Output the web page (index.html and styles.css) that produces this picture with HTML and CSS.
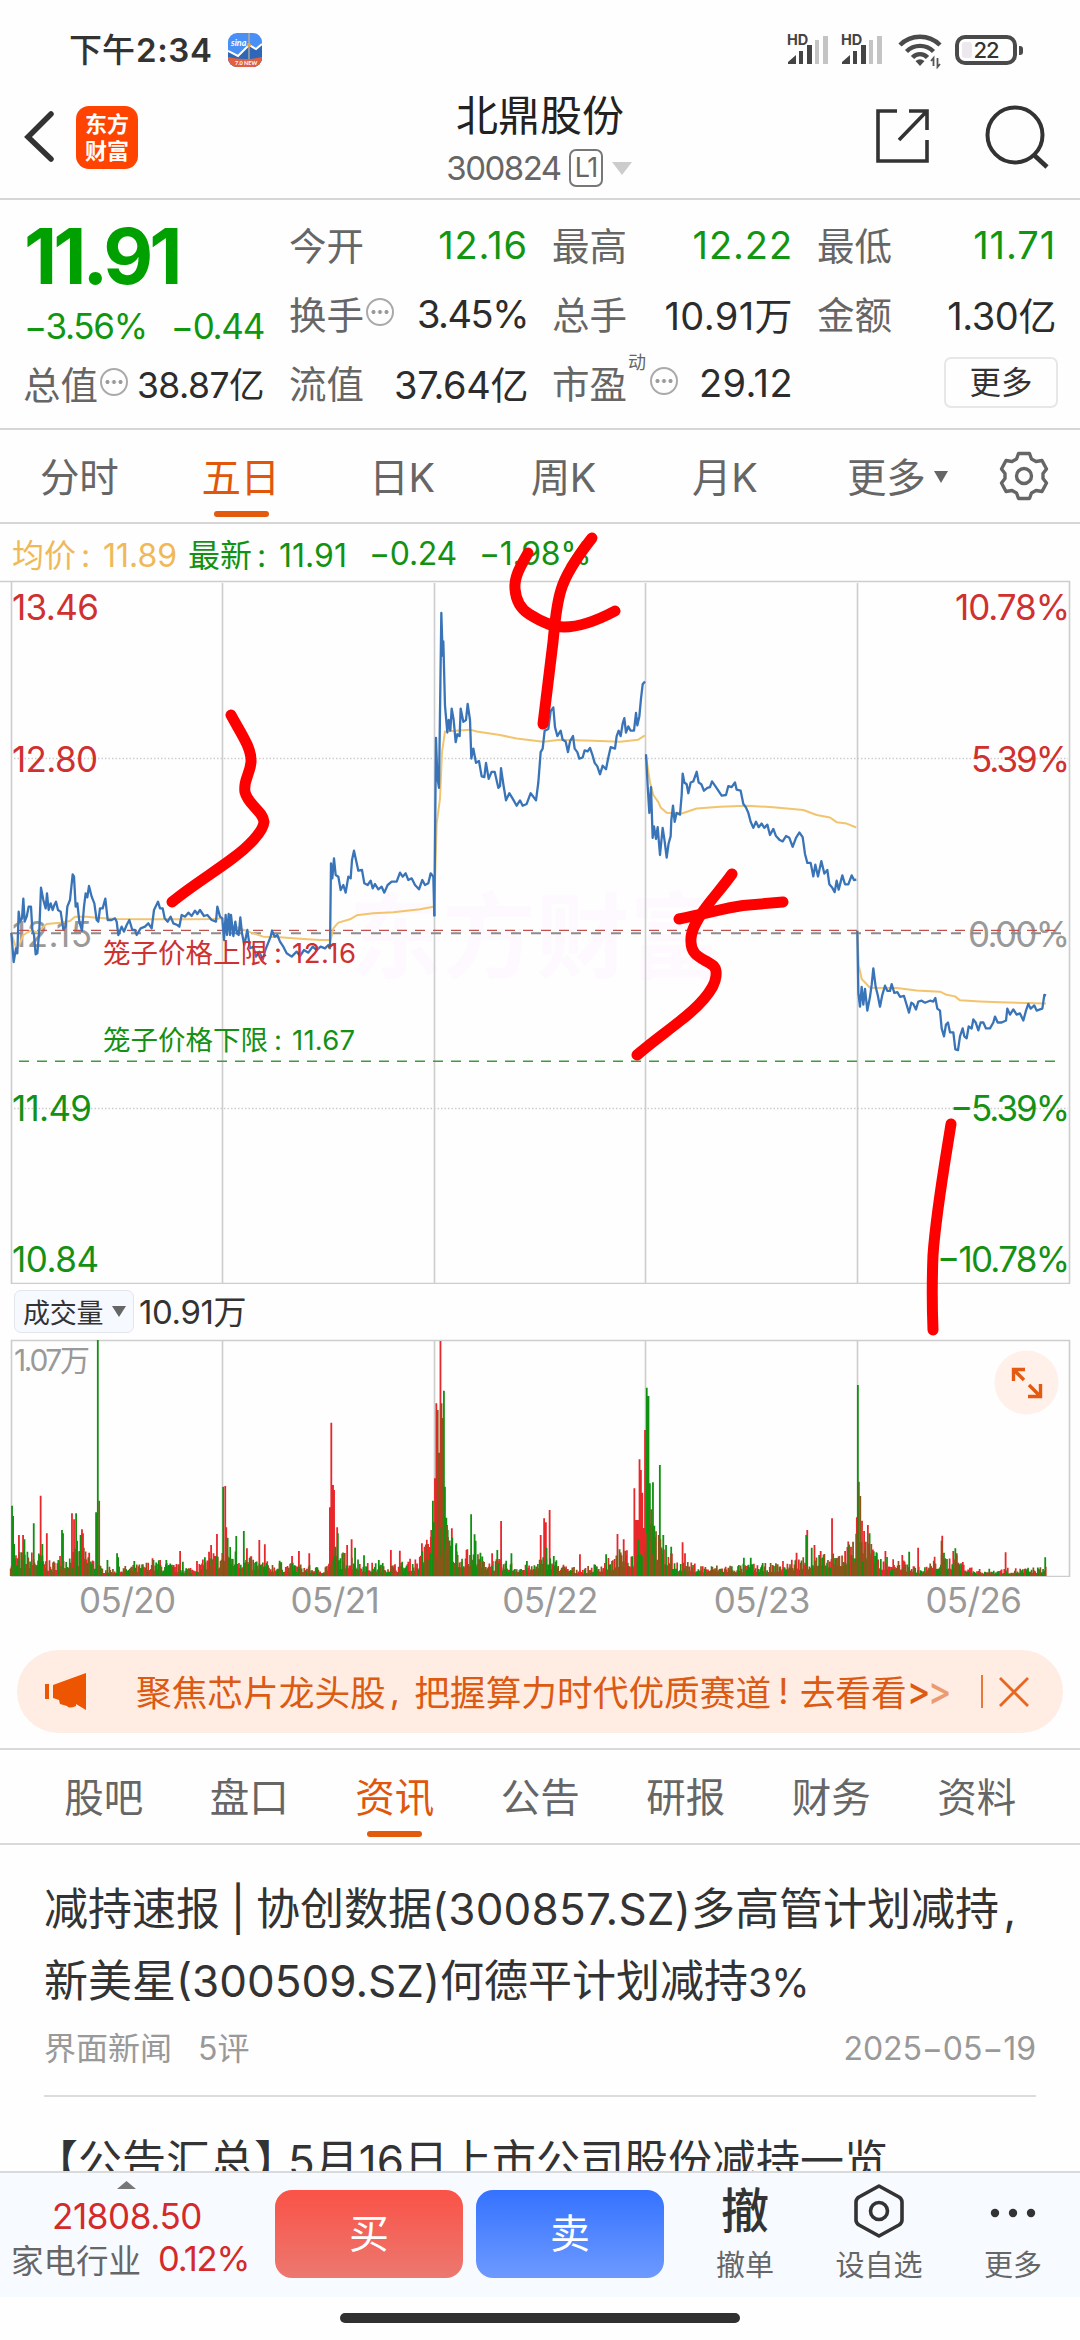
FILE: index.html
```html
<!DOCTYPE html>
<html lang="zh-CN">
<head>
<meta charset="utf-8">
<title>北鼎股份 300824</title>
<link rel="stylesheet" href="styles.css">
</head>
<body>
<div class="screen">
  <div class="status">
    <span class="clock">下午<b>2:34</b></span>
    <svg class="app" width="34" height="34" viewBox="0 0 34 34">
      <defs><clipPath id="r"><rect width="34" height="34" rx="9"/></clipPath></defs>
      <g clip-path="url(#r)"><rect width="34" height="34" fill="#4a90f4"/><path d="M0 18L10 23L21 12L28 16L34 11V34H0Z" fill="#2f66b8"/><path d="M0 18L10 23L21 12L28 16L34 11" fill="none" stroke="#fff" stroke-width="2"/><path d="M21 0V26" stroke="#c9b48e" stroke-width="1.200"/><circle cx="21" cy="12" r="2" fill="#e8a24a"/><path d="M0 24Q17 28 34 24V34H0Z" fill="#e0603f"/></g>
      <text x="3" y="13" class="app-a">sina</text><text x="7" y="32" class="app-b">7.0 NEW</text>
    </svg>
    <span class="grow"></span>
    <svg width="41" height="34" viewBox="0 0 41 34" class="sig"><text x="-1" y="12">HD</text><path d="M0 31V29L8 22V31ZM11 18h4v13h-4ZM19 12h5v19h-5Z" fill="#444"/><path d="M27 7h4v24h-4ZM35 3h5v28h-5Z" fill="#c4c4c4"/></svg>
    <svg width="41" height="34" viewBox="0 0 41 34" class="sig"><text x="-1" y="12">HD</text><path d="M0 31V29L8 22V31ZM11 18h4v13h-4ZM19 12h5v19h-5Z" fill="#444"/><path d="M27 7h4v24h-4ZM35 3h5v28h-5Z" fill="#c4c4c4"/></svg>
    <svg class="wifi" width="44" height="36" viewBox="0 0 44 36"><g fill="none" stroke="#4a4a4a" stroke-width="4.400"><path d="M2 12C13 1 31 1 42 12"/><path d="M8.500 18.500C16 11 28 11 35.500 18.500"/><path d="M14.500 24.500C18.500 20 25.500 20 29.500 24.500"/></g><path d="M17.500 28Q22 24.500 26.500 28L22 33Z" fill="#4a4a4a"/><path d="M35.500 33V25L33 28M39.500 25V34L42 31" fill="none" stroke="#555" stroke-width="1.800"/></svg>
    <span class="battery"><i></i>22</span><span class="nub"></span>
  </div>

  <header class="head">
    <div class="head-l">
      <svg width="30" height="54" viewBox="0 0 30 54"><path d="M26 4L3 27L26 49" fill="none" stroke="#333" stroke-width="5.500" stroke-linecap="round"/></svg>
      <div class="logo"><span>东方</span><span>财富</span></div>
    </div>
    <div class="head-c">
      <h1>北鼎股份</h1>
      <div class="code"><span>300824</span><em>L1</em><svg width="20" height="13"><path d="M0 0H20L10 13Z" fill="#ccc"/></svg></div>
    </div>
    <div class="head-r">
      <svg width="54" height="56" viewBox="0 0 54 56"><path d="M21 3H2V53H51V32M33 3H51V22M51 3L23 32" fill="none" stroke="#333" stroke-width="3.600"/></svg>
      <svg width="66" height="66" viewBox="0 0 66 66"><circle cx="30" cy="31" r="27.500" fill="none" stroke="#333" stroke-width="4"/><path d="M49 51L62 63" stroke="#333" stroke-width="4.600"/></svg>
    </div>
  </header>

  <section class="quote">
    <div class="q-left">
      <div class="price">11.91</div>
      <div class="chg"><span>−3.56%</span><span>−0.44</span></div>
      <div class="cell"><label>总值</label><i class="tip"></i><span>38.87亿</span></div>
    </div>
    <div class="q-grid">
      <div class="cell"><label>今开</label><span class="g">12.16</span></div>
      <div class="cell"><label>最高</label><span class="g">12.22</span></div>
      <div class="cell"><label>最低</label><span class="g">11.71</span></div>
      <div class="cell"><label>换手</label><i class="tip"></i><span class="tight">3.45%</span></div>
      <div class="cell"><label>总手</label><span class="wide">10.91万</span></div>
      <div class="cell"><label>金额</label><span>1.30亿</span></div>
      <div class="cell"><label>流值</label><span>37.64亿</span></div>
      <div class="cell"><label>市盈</label><sup>动</sup><i class="tip"></i><span class="wide">29.12</span></div>
      <div class="cell"><button class="more">更多</button></div>
    </div>
  </section>

  <nav class="periods">
    <a>分时</a><a class="on">五日</a><a>日K</a><a>周K</a><a>月K</a><a class="dd">更多<svg width="14" height="12"><path d="M0 0H14L7 12Z" fill="#666"/></svg></a>
    <svg class="gear" width="52" height="52" viewBox="-26 -26 52 52" fill="none" stroke="#666" stroke-width="3.400" stroke-linejoin="round"><path d="M-5.500 -22.500H5.500L7.500 -17L12 -14.500L18 -15.500L22.500 -7L19 -2.500V2.500L22.500 7L18 15.500L12 14.500L7.500 17L5.500 22.500H-5.500L-7.500 17L-12 14.500L-18 15.500L-22.500 7L-19 2.500V-2.500L-22.500 -7L-18 -15.500L-12 -14.500L-7.500 -17Z"/><circle r="7.500"/></svg>
  </nav>

  <div class="info"><span class="avg">均价<u>:</u>11.89</span><span>最新<u>:</u>11.91</span><span class="d1">−0.24</span><span class="d2">−1.98%</span></div>

  <svg class="chart" width="1080" height="704" viewBox="0 580 1080 704">
    <text class="wm" x="349" y="971" textLength="374">东方财富</text>
    <g class="frame">
      <path d="M0 581.500H1069.500V1283.500H11.500V581.500M222.500 583V1283M434.500 583V1283M645.500 583V1283M857.500 583V1283"/>
      <path d="M14 758.500H1068M14 1108.500H1068" stroke-dasharray="1.500 2"/>
    </g>
    <g class="ylab">
      <text x="12" y="620" textLength="87" class="r">13.46</text>
      <text x="12" y="772" textLength="86" class="r">12.80</text>
      <text x="12" y="947" textLength="80" class="n">12.15</text>
      <text x="12" y="1121" textLength="80" class="g">11.49</text>
      <text x="12" y="1272" textLength="87" class="g">10.84</text>
      <text x="955" y="620" textLength="115" class="r">10.78%</text>
      <text x="971" y="772" textLength="99" class="r">5.39%</text>
      <text x="968" y="947" textLength="102" class="n">0.00%</text>
      <text x="950" y="1121" textLength="120" class="g">−5.39%</text>
      <text x="937" y="1272" textLength="133" class="g">−10.78%</text>
    </g>
    <path d="M11 933.300H1066" stroke="#8c8c8c" stroke-width="2" stroke-dasharray="10 10"/>
    <path d="M19 930.300H1056" stroke="#c4504e" stroke-width="1.300" stroke-dasharray="10 8"/>
    <path d="M19 1061.300H1056" stroke="#3d9b3d" stroke-width="1.500" stroke-dasharray="10 8"/>
    <g class="mean">
      <g transform="translate(0 560) scale(.33333)">
        <polyline points="34,1119 50,1170 60,1150 70,1125 95,1110 110,1118 140,1092 180,1088 210,1083 225,1070 260,1070 290,1073 350,1077 450,1078 560,1078 640,1077 667,1075"/>
        <polyline points="668,1090 720,1105 745,1115 790,1130 840,1132 900,1136 960,1140 992,1140 1000,1105 1015,1088 1050,1078 1070,1066 1120,1060 1180,1057 1260,1048 1300,1040"/>
      </g>
      <g transform="translate(420 520) scale(.33333 .35714)">
        <polyline points="43,1080 50,850 60,780 66,650 75,592 150,587 170,592 240,602 290,612 370,621 420,615 520,618 600,621 655,615 675,603"/>
        <polyline points="678,660 690,735 700,770 715,790 722,805 740,820 785,822 830,808 900,803 980,800 1060,804 1150,812 1190,826 1230,833 1250,846 1280,850 1309,861"/>
      </g>
      <g transform="translate(700 720) scale(.33333 .39541)">
        <polyline points="472,533 476,620 485,655 510,677 590,678 650,684 720,687 740,695 765,699 780,709 840,712 900,714 1038,717"/>
      </g>
    </g>
    <g class="last">
      <g transform="translate(0 560) scale(.33333)">
        <polyline points="34,1119 41,1206 48,1165 52,1180 56,1055 60,1085 66,1075 70,1016 74,1085 80,1070 86,1040 93,1040 97,1110 102,1125 107,1183 112,1180 118,1110 123,983 130,1020 137,1045 141,1000 146,1050 152,1030 158,1050 163,1035 168,1025 174,1050 182,1055 190,1108 197,1100 202,1040 210,1020 218,943 222,950 227,1040 232,1030 238,1085 246,1112 252,1040 257,1000 262,1012 267,978 275,1010 283,1030 290,1080 295,1085 300,1045 308,1045 316,1016 323,1080 335,1080 345,1075 350,1085 355,1125 365,1100 372,1115 380,1095 388,1080 397,1110 405,1110 410,1125 422,1105 435,1100 445,1090 455,1105 462,1050 474,1025 480,1045 488,1045 494,1075 503,1085 512,1070 520,1090 532,1095 538,1100 545,1065 555,1070 565,1058 575,1068 585,1052 592,1062 600,1050 612,1068 622,1065 635,1080 648,1085 652,1040 660,1070 667,1075 668,1090 672,1140 677,1065 681,1125 686,1062 690,1125 693,1065 700,1128 706,1085 711,1120 716,1125 721,1072 726,1120 733,1155 742,1110 750,1165 760,1160 768,1190 778,1175 788,1200 796,1170 804,1150 812,1130 816,1112 824,1130 832,1125 840,1145 850,1160 860,1180 875,1190 890,1175 900,1188 912,1170 925,1178 938,1160 950,1170 962,1160 975,1165 985,1155 990,1165 993,910 997,955 1002,895 1007,945 1015,950 1022,990 1030,975 1037,998 1045,950 1052,955 1056,900 1062,872 1068,900 1075,932 1086,930 1093,970 1103,975 1112,962 1118,985 1125,972 1135,988 1145,980 1153,998 1163,975 1175,965 1190,965 1200,938 1208,950 1217,940 1225,960 1235,955 1245,975 1257,988 1267,960 1275,975 1285,970 1292,940 1300,950 1303,1068"/>
      </g>
      <g transform="translate(420 520) scale(.33333 .35714)">
        <polyline points="43,1110 48,610 52,720 57,750 64,260 68,380 70,340 75,520 82,595 86,560 91,590 95,528 101,560 107,622 112,600 119,605 122,528 130,565 138,560 143,515 150,560 154,668 160,640 168,680 177,675 185,718 193,720 198,680 206,725 215,705 224,705 235,750 240,745 243,695 250,740 258,785 268,765 278,780 290,800 300,785 308,800 320,795 332,765 340,775 348,785 355,735 362,650 368,640 374,590 385,585 392,535 400,525 405,580 412,605 422,590 428,615 437,620 444,650 450,620 459,605 464,640 472,650 478,668 488,665 494,645 503,648 510,638 518,660 524,680 532,690 540,712 548,688 558,698 565,665 572,636 585,640 590,605 596,590 602,605 608,570 613,555 618,595 625,578 632,590 642,590 648,540 652,575 658,550 663,500 668,460 675,452"/>
        <polyline points="678,656 683,745 688,820 693,748 698,890 702,858 708,893 713,860 720,938 728,862 734,900 740,945 746,905 752,885 754,840 759,800 764,845 770,820 780,825 785,770 788,710 793,735 800,740 805,765 812,735 820,732 830,705 836,735 844,740 852,758 862,750 870,748 876,732 886,745 895,758 905,772 918,770 925,745 935,748 945,735 950,755 962,758 970,795 978,805 985,820 992,845 1000,862 1008,845 1016,860 1025,850 1033,862 1042,853 1050,882 1060,865 1068,885 1078,895 1088,900 1098,885 1108,890 1118,915 1128,890 1138,875 1148,888 1155,935 1162,960 1172,960 1180,998 1186,965 1194,998 1204,955 1213,990 1222,980 1228,1020 1237,1030 1244,1042 1250,1010 1256,1035 1267,995 1275,1020 1285,1020 1295,995 1302,1008 1309,1007"/>
      </g>
      <g transform="translate(700 720) scale(.33333 .39541)">
        <polyline points="472,533 475,690 480,725 485,675 490,720 495,680 502,735 510,700 515,670 520,628 527,675 533,695 540,725 547,695 555,672 562,685 570,685 575,668 583,690 592,688 600,700 612,698 618,715 627,740 634,715 640,718 648,732 655,712 665,710 675,715 690,710 700,712 706,703 712,730 720,735 725,780 732,800 738,770 744,765 750,790 760,790 766,833 774,835 780,800 788,780 793,800 800,805 806,775 815,780 820,757 827,765 835,785 842,765 850,765 858,780 870,780 880,765 885,750 893,765 905,765 918,760 922,730 930,745 940,732 950,745 960,742 970,760 978,735 985,718 992,730 1003,722 1010,735 1020,732 1027,730 1033,695 1038,697"/>
      </g>
    </g>
    <g class="cage">
      <text x="103" y="963" textLength="165" class="r">笼子价格上限</text><text x="274" y="963" class="r">:</text><text x="292" y="963" textLength="64" class="r">12.16</text>
      <text x="103" y="1050" textLength="165" class="g">笼子价格下限</text><text x="274" y="1050" class="g">:</text><text x="292" y="1050" textLength="63" class="g">11.67</text>
    </g>
  </svg>

  <div class="vol-head"><button>成交量<svg width="14" height="11"><path d="M0 0H14L7 11Z" fill="#666"/></svg></button><span>10.91万</span></div>
  <svg class="volume" width="1080" height="238" viewBox="0 1339 1080 238">
    <path class="vframe" d="M11.500 1576.500V1340.500H1069.500V1576.500ZM222.500 1341V1576M434.500 1341V1576M645.500 1341V1576M857.500 1341V1576"/>
    <path id="up"/><path id="down"/><path id="mix"/>
    <text x="14" y="1371" textLength="76">1.07万</text>
    <circle cx="1026.500" cy="1382.500" r="32" fill="#fff0ea"/>
    <path d="M1025 1369.500H1013.500V1381M1013.500 1369.500L1024 1380M1028 1396.500H1040.500V1384M1040.500 1396.500L1029 1385" fill="none" stroke="#e35a12" stroke-width="3.400"/>
  </svg>
  <div class="dates"><span>05/20</span><span>05/21</span><span>05/22</span><span>05/23</span><span>05/26</span></div>

  <div class="banner">
    <svg width="42" height="37" viewBox="0 0 42 37" fill="#ee5500"><path d="M0 11h4v15H0ZM8 12L41 0V37L31 31V33Q24 36 22 33L15 31L14 27L8 25Z"/></svg>
    <span class="btxt">聚焦芯片龙头股<u>,</u>把握算力时代优质赛道<u>!</u>去看看<b>&gt;</b><b class="fade">&gt;</b></span>
    <i></i>
    <svg width="30" height="30" viewBox="0 0 30 30"><path d="M1 1L29 29M29 1L1 29" stroke="#e8661f" stroke-width="2.800"/></svg>
  </div>

  <nav class="tabs"><a>股吧</a><a>盘口</a><a class="on">资讯</a><a>公告</a><a>研报</a><a>财务</a><a>资料</a></nav>

  <main class="news">
    <article>
      <h2><span>减持速报<i>|</i>协创数据<s>(300857.SZ)</s>多高管计划减持<i class="c">,</i></span><br><span>新美星(300509.SZ)何德平计划减持<q>3%</q></span></h2>
      <div class="meta"><span>界面新闻</span><span>5评</span><time>2025−05−19</time></div>
    </article>
    <article class="next"><h2><span class="lb">【</span>公告汇总<span class="rb">】</span>5月16日上市公司股份减持一览</h2></article>
  </main>

  <footer class="bar">
    <div class="idx"><svg width="19" height="8"><path d="M0 8L9.500 0L19 8Z" fill="#777"/></svg><b>21808.50</b><div><span>家电行业</span><em>0.12%</em></div></div>
    <button class="buy">买</button><button class="sell">卖</button>
    <div class="act"><strong>撤</strong><span>撤单</span></div>
    <div class="act"><svg width="50" height="54" viewBox="0 0 50 54" fill="none" stroke="#333" stroke-width="3.600" stroke-linejoin="round"><path d="M25 2L45 13Q48 15 48 18V36Q48 39 45 41L25 52L5 41Q2 39 2 36V18Q2 15 5 13Z"/><circle cx="25" cy="27" r="8.500"/></svg><span>设自选</span></div>
    <div class="act"><svg width="50" height="54" viewBox="0 0 50 54" fill="#333"><circle cx="7" cy="29" r="4.200"/><circle cx="25" cy="29" r="4.200"/><circle cx="43" cy="29" r="4.200"/></svg><span>更多</span></div>
  </footer>
  <div class="home"><i></i></div>

  <svg class="ink" width="1080" height="2340" viewBox="0 0 1080 2340">
    <path d="M231 715C240 732 252 748 251 762C250 775 243 780 245 792C248 805 263 811 264 822C263 832 248 847 233 858C216 871 190 887 172 902"/>
    <path d="M528 553C520 567 514 577 515 589C516 601 521 609 529 614C540 621 552 627 564 627C582 627 600 619 615 611"/>
    <path d="M592 538C577 557 566 573 561 590C556 606 555 622 553 642L543 724"/>
    <path d="M732 874C722 888 710 901 704 910C697 920 690 931 691 942C691 952 697 956 704 960C713 965 717 966 716 976C715 990 697 1008 680 1021C665 1033 652 1042 637 1055"/>
    <path d="M679 919C706 914 724 908 743 905.500L783 902"/>
    <path d="M951 1124C944 1168 936 1213 933 1255C932 1280 932 1305 933 1330"/>
  </svg>
</div>
<script src="volume.js"></script>
</body>
</html>
```
FILE: volume.js
```js
// Minute volume bars: measured spikes over a low background level.
const K = 2.9037, BASE = 918;
const spikes = `35,707g 38,738g 41,822g 55,795r 67,795r 71,808g 98,760g 118,677r 123,822g 136,790r 180,780g 183,790g 209,730r 215,748r 221,730g 224,812g 234,795g 238,778r 241,790r 259,848r 279,727g 284,210g 288,692r 312,870g 340,850g 343,862g 390,873g 443,865r 465,870r 483,870g 523,843r 531,875g 572,873r 595,862g 607,845r 613,825r 620,850r 630,792r 648,650g 654,648r 657,772r 661,803g 686,798g 708,783g 717,835r 753,810r 769,823r 812,872g 848,858r 868,843r 898,850r 958,712r 962,458r 967,645r 970,660r 974,830g 979,772r 981,790g 1008,825r 1021,808r 1031,833g 1057,856g 1100,870g 1135,840r 1161,842r 1225,820r 1233,830r 1243,822r 1251,800r 1257,692g 1263,625r 1267,400r 1271,420m 1275,548m 1279,213r 1282,400m 1285,444m 1289,362g 1292,650g 1296,743g 1300,780g 1312,775r 1325,820g 1357,838r 1368,733g 1378,793g 1381,812g 1395,848g 1429,850r 1444,840g 1455,753r 1485,850g 1530,873g 1570,795r 1580,745r 1585,757r 1596,720r 1587,833g 1608,858g 1684,853r 1760,853g 1793,792r 1799,838g 1811,808r 1842,655r 1847,750r 1852,750r 1857,568r 1861,600r 1865,668r 1873,480r 1878,353g 1883,378g 1887,640g 1891,718m 1896,637g 1900,767g 1904,800m 1916,585g 1926,795g 1934,825g 1949,830g 1982,817r 1989,850r 2160,863g 2180,863g 2313,848r 2344,780r 2341,795g 2357,833g 2365,825r 2383,843r 2393,855g 2416,745r 2454,843r 2471,830r 2477,815m 2488,742r 2491,345g 2494,635r 2498,678m 2503,752r 2509,783r 2514,815m 2520,765r 2525,790g 2530,822r 2546,850r 2571,843r 2620,855r 2640,845g 2666,833r 2736,797r 2734,812m 2741,848g 2768,843r 2774,835g 2778,850m 2920,847r 3035,862g`;
const level = [[30,75],[110,75],[150,40],[170,65],[240,85],[270,60],[292,30],[330,25],[400,35],[450,50],[500,38],[560,28],[600,55],[640,75],[670,90],[720,60],[780,42],[860,38],[940,25],[955,60],[1010,75],[1060,40],[1150,38],[1220,60],[1255,170],[1295,170],[1330,90],[1400,60],[1540,30],[1568,60],[1600,60],[1650,28],[1700,25],[1760,50],[1840,85],[1870,230],[1890,230],[1920,100],[1970,45],[2060,32],[2120,35],[2250,38],[2340,65],[2420,65],[2485,130],[2510,130],[2550,60],[2620,48],[2680,22],[2720,65],[2780,60],[2830,20],[3040,28]];
function at(x) {
  for (let i = 1; i < level.length; i++) {
    const [a, p] = level[i - 1], [b, q] = level[i];
    if (x <= b) return p + (q - p) * (x - a) / (b - a);
  }
  return 20;
}
let seed = 7;
const rnd = () => (seed = (seed * 16807) % 2147483647) / 2147483647;
const out = { r: '', g: '', m: '' };
const bar = (x, h, c, w) => {
  out[c] += `M${(x / K - w / 2).toFixed(2)} ${(1576 - h / 3).toFixed(2)}h${w}V1576h-${w}z`;
};
for (let x = 31; x < 3038; x += 2.56) {
  const r = rnd(), t = rnd();
  bar(x, at(x) * (0.3 + 0.75 * r ** 1.7), t < 0.45 ? 'r' : t < 0.75 ? 'g' : 'm', 1.7);
}
for (const s of spikes.split(' ')) {
  const [x, y] = s.split(',');
  bar(+x, BASE - parseInt(y), s.slice(-1), 1.8);
}
document.getElementById('up').setAttribute('d', out.r);
document.getElementById('down').setAttribute('d', out.g);
document.getElementById('mix').setAttribute('d', out.m);
```
FILE: styles.css
```css
* { box-sizing: border-box; margin: 0; padding: 0; }
body { width: 1080px; height: 2340px; background: #fefefe; overflow: hidden; font-family: Inter, "Noto Sans CJK SC", sans-serif; color: #333; }
button { font: inherit; border: 0; background: none; color: inherit; }
i, em, u, s { font-style: normal; text-decoration: none; }
q::before, q::after { content: none; }
svg { display: block; flex: none; }
.screen { position: relative; width: 1080px; height: 2340px; display: flex; flex-direction: column; overflow: hidden; }
.screen > * { flex: none; }

.status { height: 82px; padding: 33px 57px 0 69px; display: flex; align-items: flex-start; }
.clock { font-size: 33px; line-height: 34px; font-weight: 500; color: #333; width: 159px; white-space: nowrap; }
.clock b { font-weight: 600; font-size: 33px; letter-spacing: .6px; margin-left: 1px; }
.app-a { font: italic bold 9px Lato, sans-serif; fill: #fff; }
.app-b { font: bold 5.500px Lato, sans-serif; fill: #fff; }
.grow { flex: 1; }
.sig { margin-right: 13px; overflow: visible; }
.sig text { font: 700 14.500px Inter, sans-serif; fill: #444; }
.wifi { margin-left: 2px; margin-right: 13px; }
.battery { position: relative; margin-top: 2px; width: 62px; height: 30px; border: 4px solid #4a4a4a; border-radius: 10px; font-size: 22px; line-height: 22px; text-align: center; font-weight: 500; letter-spacing: -1px; }
.battery i { position: absolute; z-index: -1; left: 3px; top: 3px; width: 10px; height: 16px; background: #ece8ee; border-radius: 3px; }
.nub { width: 4px; height: 9px; margin: 13px 0 0 2px; background: #4a4a4a; border-radius: 0 3px 3px 0; }

.head { height: 118px; border-bottom: 2px solid #d6d6d6; display: grid; grid-template-columns: 1fr 240px 1fr; }
.head-l { display: flex; align-items: flex-start; padding: 24px 0 0 25px; gap: 21px; }
.head-l > svg { margin-top: 4px; overflow: visible; }
.logo { width: 62px; height: 63px; border-radius: 13px; background: #ff4300; color: #fff; font-size: 22px; line-height: 27px; font-weight: 700; text-align: center; display: flex; flex-direction: column; justify-content: center; }
.head-c { text-align: center; }
h1 { font-size: 42px; line-height: 50px; font-weight: 400; color: #222; margin-top: 9px; white-space: nowrap; }
.code { display: flex; align-items: center; justify-content: center; font-size: 33px; color: #666; letter-spacing: -1.500px; height: 40px; margin-top: 7px; padding-right: 2px; }
.code em { width: 34px; height: 38px; margin: 0 9px 0 8px; border: 2px solid #777; border-radius: 7px; font-size: 27px; line-height: 34px; text-align: center; }
.head-r { display: flex; justify-content: flex-end; padding: 26px 29px 0 0; gap: 55px; }
.head-r svg:last-child { margin-top: -4px; }

.quote { height: 230px; border-bottom: 2px solid #d6d6d6; display: flex; gap: 26px; padding: 10px 24px 0; }
.q-left { width: 240px; }
.price { height: 93px; line-height: 93px; font-size: 77px; font-weight: 650; color: #00a000; letter-spacing: -4px; }
.chg { height: 46px; display: flex; justify-content: space-between; align-items: center; font-size: 35px; color: #109610; letter-spacing: -1.300px; white-space: nowrap; }
.q-grid { display: grid; grid-template-columns: 238px 240px 238px; grid-auto-rows: 69px; column-gap: 25px; }
.cell { display: flex; height: 69px; align-items: center; font-size: 38px; white-space: nowrap; }
.cell label { font-size: 37.500px; color: #666; width: 75px; margin: -3px -1px 0 -1px; }
.cell span { margin-left: auto; letter-spacing: -.4px; color: #2c2c2c; }
.cell .g { color: #109610; letter-spacing: .9px; }
.cell .tight { letter-spacing: -1.500px; }
.cell .wide { letter-spacing: .4px; }
.cell sup { font-size: 18px; line-height: 18px; align-self: flex-start; margin: 6px 0 0 2px; width: 19px; color: #666; }
.q-left .cell span { font-size: 35.500px; letter-spacing: -.5px; margin-top: -2px; }
.tip { width: 28px; height: 28px; margin: -3px 0 0 3px; border: 2px solid #aaa; border-radius: 50%; background: radial-gradient(circle, #999 1.700px, transparent 2.200px) center / 6.500px 24px repeat-x; background-clip: content-box; padding: 0 2px; }
.more { margin-left: auto; margin-right: -2px; width: 114px; height: 51px; border: 2px solid #e8e6e6; border-radius: 7px; font-size: 31.500px; line-height: 47px; color: #333; }

.periods { height: 94px; border-bottom: 2px solid #d6d6d6; display: flex; }
.periods a { width: 161.400px; height: 92px; display: flex; justify-content: center; align-items: center; font-size: 39.500px; color: #666; position: relative; padding: 0 3px 3px 0; letter-spacing: -.3px; }
.periods .dd svg { position: absolute; right: 20px; top: 41px; }
.periods .on, .tabs .on { color: #e0570c; }
.periods .on::after, .tabs .on::after { content: ""; position: absolute; bottom: 5px; left: 50%; margin-left: -28px; width: 55px; height: 6px; border-radius: 3px; background: #e35a0c; }
.gear { margin: 20px 0 0 30px; }

.info { height: 56px; padding: 2px 0 0 12px; display: flex; align-items: center; font-size: 32px; color: #129212; letter-spacing: 0; white-space: nowrap; }
.info u { display: inline-block; width: 27px; padding-left: 5px; }
.info span { width: 176px; }
.info .avg { color: #efb958; }
.info .d1 { margin-left: 5px; width: 110px; letter-spacing: -.3px; }
.info .d2 { width: auto; letter-spacing: -.3px; }

.frame path { fill: none; stroke: #cdcdcd; stroke-width: 1.600; }
.ylab text { font-size: 35px; font-weight: 400; }
.chart .r { fill: #cf3030; } .chart .g { fill: #149114; } .chart .n { fill: #999; }
.cage text { font-size: 27.500px; }
.wm { font-size: 93px; font-weight: 700; fill: #fdf9fe; }
.mean polyline, .last polyline { fill: none; vector-effect: non-scaling-stroke; stroke-linejoin: round; }
.mean polyline { stroke: #f2c46d; stroke-width: 2; }
.last polyline { stroke: #3a74b8; stroke-width: 2.300; }

.vol-head { height: 55px; display: flex; align-items: center; padding: 0 14px; font-size: 33px; gap: 5px; letter-spacing: -.4px; }
.vol-head span { margin-top: -3px; }
.vol-head button { width: 120px; height: 43px; background: #f6f9ff; border: 1.500px solid #e3e5ec; border-radius: 7px; font-size: 27px; letter-spacing: -.3px; display: flex; align-items: center; padding-left: 8px; gap: 9px; white-space: nowrap; }
.vframe { fill: none; stroke: #cdcdcd; stroke-width: 1.600; }
.volume text { font-size: 30px; fill: #999; }
#up { fill: #e8272a; } #down { fill: #109010; } #mix { fill: #8a5518; }
.dates { height: 73px; padding-left: 79px; display: flex; font-size: 35px; line-height: 47px; color: #999; letter-spacing: -.6px; }
.dates span { width: 211.600px; flex: none; }
.dates span:last-child { width: auto; }

.banner { height: 83px; margin: 0 17px; border-radius: 42px; background: #ffece3; display: flex; align-items: center; color: #dd5a12; }
.banner > svg:first-child { margin-left: 28px; }
.btxt { width: 845px; margin-left: 49px; font-size: 35.700px; display: flex; align-items: center; white-space: nowrap; height: 83px; padding-bottom: 2px; }
.btxt u { width: 28.500px; padding-left: 4px; }
.btxt u + u { padding-left: 7px; }
.btxt b { font-weight: 500; width: 21px; transform: scaleY(1.100); }
.btxt .fade { opacity: .55; }
.banner i { width: 1.500px; height: 33px; background: #e8793a; }
.banner > svg:last-child { margin-left: 16px; }

.tabs { height: 97px; margin-top: 15px; border-top: 2px solid #d9d9d9; border-bottom: 2px solid #d9d9d9; padding-left: 31px; display: flex; }
.tabs a { width: 145.500px; position: relative; text-align: center; font-size: 39.500px; line-height: 97px; color: #666; }
.tabs .on::after { bottom: 6px; }

.news { height: 326px; overflow: hidden; padding: 0 44px; }
.news article { height: 252px; border-bottom: 2px solid #dcdcdc; padding-top: 28px; }
h2 { font-size: 44px; line-height: 72px; font-weight: 400; color: #333; white-space: nowrap; }
h2 i { display: inline-block; width: 36px; text-align: center; }
h2 s { letter-spacing: .2px; }
h2 q { letter-spacing: -1px; font-size: 39px; }
h2 .c { width: 22px; }
.meta { display: flex; font-size: 32px; line-height: 44px; color: #999; gap: 26px; margin-top: 8px; }
.meta time { margin-left: auto; letter-spacing: -.1px; }
.news .next { padding-top: 28px; border: 0; }
.lb { margin-left: -10px; }
.rb { margin-right: -10px; }

.bar { height: 126px; border-top: 2px solid #d8dade; background: #f7faff; display: flex; }
.idx { width: 275px; position: relative; color: #d42a2a; }
.idx > svg { margin: 8px 0 0 117px; }
.idx > b { display: block; font-weight: 400; width: 254px; text-align: center; font-size: 35px; line-height: 40px; margin-top: 7px; letter-spacing: -.4px; }
.idx div { display: flex; align-items: center; height: 46px; margin-top: -1px; padding-left: 11px; gap: 17px; font-size: 34.500px; }
.idx span { font-size: 32.500px; color: #666; white-space: nowrap; }
.idx em { letter-spacing: -1.100px; }
.buy, .sell { width: 188px; height: 88px; margin-top: 17px; border-radius: 17px; color: #fff; font-size: 40px; line-height: 88px; background: linear-gradient(#fa5247, #ec786f); }
.sell { margin-left: 13px; background: linear-gradient(#3472ff, #6e9aff); }
.act { width: 134px; display: flex; flex-direction: column; align-items: center; padding-top: 11px; }
.sell + .act { margin-left: 14px; }
.act strong { font-size: 48px; line-height: 54px; font-weight: 500; }
.act span { font-size: 29px; line-height: 34px; margin-top: 11px; color: #666; white-space: nowrap; }
.home { height: 43px; padding: 16px 0 0 340px; }
.home i { display: block; width: 400px; height: 10px; border-radius: 5px; background: #303030; }

.ink { position: absolute; left: 0; top: 0; pointer-events: none; fill: none; stroke: #fe0000; stroke-width: 11; stroke-linecap: round; stroke-linejoin: round; }
```
